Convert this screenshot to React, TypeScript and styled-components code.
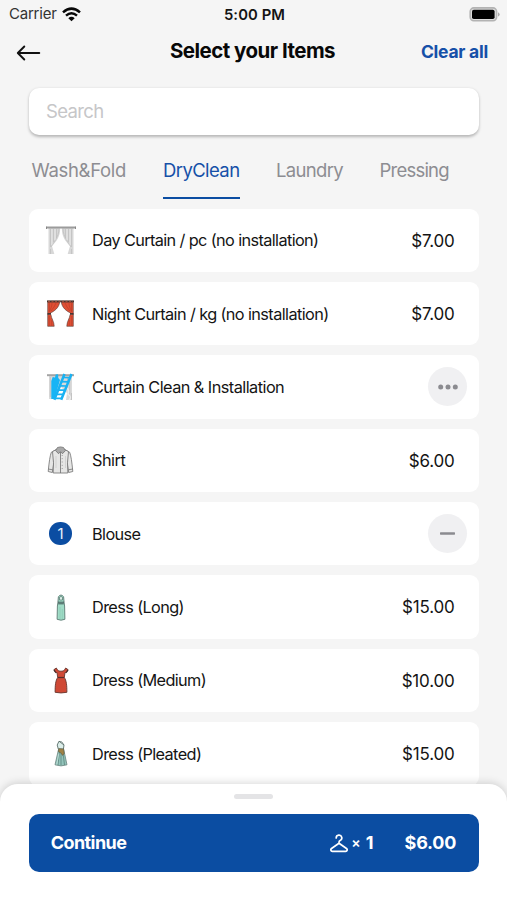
import React from "react";
import styled, { createGlobalStyle } from "styled-components";

const BLUE = "#0b4da2";

const GlobalStyle = createGlobalStyle`
  *, *::before, *::after { box-sizing: border-box; }
  body { margin: 0; background: #f5f5f5; font-family: Inter, "Liberation Sans", sans-serif; color: #111; }
  button, input { font: inherit; border: 0; padding: 0; margin: 0; background: none; }
`;

const Screen = styled.main`
  width: 507px;
  height: 900px;
  overflow: hidden;
  display: flex;
  flex-direction: column;
  background: #f5f5f5;
`;

const StatusBar = styled.div`
  height: 28px;
  flex: none;
  display: grid;
  grid-template-columns: 1fr auto 1fr;
  align-items: center;
  padding: 0 7px 0 9px;
`;

const Text = styled.span<{ $size: number; $weight?: number; $track?: number; $color?: string }>`
  font-size: ${(p) => p.$size}px;
  font-weight: ${(p) => p.$weight ?? 400};
  letter-spacing: ${(p) => p.$track ?? 0}px;
  color: ${(p) => p.$color ?? "#141414"};
  line-height: 1.2;
  white-space: nowrap;
`;

const Carrier = styled.div`
  display: flex;
  align-items: center;
  gap: 5px;
`;

const Clock = styled.div`
  padding-top: 1px;
`;

const BatterySlot = styled.div`
  display: flex;
  justify-content: flex-end;
`;

const Header = styled.header`
  height: 46px;
  flex: none;
  display: grid;
  grid-template-columns: 1fr auto 1fr;
  align-items: center;
  padding: 0 19px 0 16px;
`;

const IconButton = styled.button`
  display: flex;
  margin-top: 4px;
`;

const Title = styled.h1`
  margin: 0;
  padding: 1px 0 0 1px;
  font-size: 20.5px;
  line-height: 1.2;
  font-weight: 700;
  letter-spacing: -0.53px;
  color: #080808;
`;

const ClearButton = styled.button`
  justify-self: end;
`;

const SearchBox = styled.label`
  height: 46.5px;
  flex: none;
  margin: 14px 28px 0 29px;
  padding: 0 17px;
  display: flex;
  align-items: center;
  background: #fff;
  border-radius: 10px;
  box-shadow: 0 1.5px 3px rgba(0, 0, 0, 0.26);
`;

const SearchInput = styled.input`
  width: 100%;
  outline: 0;
  font-size: 18.5px;
  letter-spacing: -0.65px;
  &::placeholder { color: #c6c6c8; opacity: 1; }
`;

const Tabs = styled.nav`
  flex: none;
  height: 47px;
  margin: 17px 0 0 31.5px;
  display: flex;
  gap: 36.5px;
`;

const Tab = styled.button<{ $active?: boolean; $width: number }>`
  width: ${(p) => p.$width}px;
  border-bottom: 2px solid ${(p) => (p.$active ? BLUE : "transparent")};
  padding-bottom: 8px;
  display: flex;
  align-items: center;
`;

const List = styled.ul`
  list-style: none;
  margin: 10px 28px 0 29px;
  padding: 0;
  flex: 1;
  min-height: 0;
  overflow: hidden;
  display: flex;
  flex-direction: column;
  gap: 9.75px;
`;

const Row = styled.li`
  flex: none;
  height: 63.6px;
  display: flex;
  align-items: center;
  background: #fff;
  border-radius: 9px;
  padding-right: 24.5px;
`;

const IconSlot = styled.span`
  width: 63px;
  display: flex;
  justify-content: center;
  svg { display: block; }
`;

const Label = styled.span`
  flex: 1;
  display: flex;
  padding-top: 1.5px;
`;

const Price = styled.span`
  display: flex;
  padding-top: 1px;
`;

const Badge = styled.span`
  width: 22.5px;
  height: 22.5px;
  border-radius: 50%;
  background: ${BLUE};
  color: #e9f0fa;
  display: flex;
  align-items: center;
  justify-content: center;
  font-size: 15px;
`;

const RoundButton = styled.button`
  width: 39px;
  height: 39px;
  margin-right: -12.5px;
  border-radius: 50%;
  background: #f0f0f2;
  display: flex;
  align-items: center;
  justify-content: center;
`;

const Sheet = styled.footer`
  flex: none;
  height: 116px;
  background: #fff;
  border-radius: 18px 18px 0 0;
  box-shadow: 0 -1px 8px rgba(0, 0, 0, 0.16);
  display: flex;
  flex-direction: column;
  align-items: center;
  z-index: 1;
`;

const Handle = styled.div`
  width: 39.5px;
  height: 5px;
  border-radius: 3px;
  background: #e4e4e6;
  margin-top: 10px;
`;

const Continue = styled.button`
  width: 450.5px;
  height: 58.5px;
  margin: 14.5px 0 0 1px;
  padding: 1px 23px 0 22px;
  border-radius: 10px;
  background: ${BLUE};
  display: flex;
  align-items: center;
`;

const Count = styled.span`
  margin-left: auto;
  margin-right: 31px;
  display: flex;
  align-items: center;
`;

const Times = styled.span`
  margin: 0 5px 0 3px;
  display: flex;
`;

const Wifi = () => (
  <svg width="19" height="15" viewBox="0 0 19 15" fill="none" stroke="#080808" strokeWidth="2.5">
    <path d="M1 5.4Q9.5-2.2 18 5.4" />
    <path d="M4 8.6Q9.5 3.8 15 8.6" />
    <path d="M9.5 14.3 6.3 11.2Q9.5 8.5 12.7 11.2Z" fill="#080808" stroke="none" />
  </svg>
);

const Battery = () => (
  <svg width="31" height="15" viewBox="0 0 31 15">
    <rect x="1.2" y=".9" width="26.4" height="12.800" rx="3.6" fill="#dcdcdc" stroke="#b3b3b3" strokeWidth="1.6" />
    <rect x="3" y="2.800" width="22.600" height="9.200" rx="1.800" fill="#000" />
    <path d="M29 5.2q1.7.7 1.7 2.2T29 9.6z" fill="#aaa" />
  </svg>
);

const BackArrow = () => (
  <svg width="25" height="18" viewBox="0 0 25 18" fill="none" stroke="#111" strokeWidth="1.900" strokeLinecap="round" strokeLinejoin="round">
    <path d="M23.300 9H2M8.300 2.500 1.800 9l6.500 6.500" />
  </svg>
);

const DayCurtain = () => (
  <svg width="30" height="30" viewBox="0 0 30 30">
    <path d="M2.500 3h11.700c0 9-3.500 13-8.200 18l2.300 8H2.500z" fill="#d8d8d8" />
    <path d="M27.500 3H15.800c0 9 3.500 13 8.200 18l-2.300 8h5.800z" fill="#d8d8d8" />
    <path d="M4.500 4v18M7.500 4v13M10.500 4v9M13 4C12.600 12 8 17 5 22M4.500 24v5M25.500 4v18M22.500 4v13M19.500 4v9M17 4c.4 8 5 13 8 18M25.500 24v5" fill="none" stroke="#bdbdbd" strokeWidth=".7" />
    <path d="M5.900 4v16M9 4v11M24.100 4v16M21 4v11" stroke="#efefef" strokeWidth=".7" />
    <path d="M.5 2.500h29" stroke="#9b9b9b" strokeWidth="2" />
    <path d="M.5 1.500v2.500M29.500 1.500v2.500" stroke="#888" />
  </svg>
);

const NightCurtain = () => (
  <svg width="27" height="27" viewBox="0 0 27 27">
    <g fill="#df4f34" stroke="#553b36" strokeWidth=".6">
      <path d="M.7 2h12C12 7.500 8 11 2.500 13.500l-1.800 1z" />
      <path d="M26.300 2h-12C15 7.500 19 11 24.500 13.500l1.800 1z" />
      <path d="M.7 14.500h3.200c.5 4.500 3.200 6.500 3.300 11.800H.7z" />
      <path d="M26.300 14.500h-3.200c-.5 4.500-3.200 6.500-3.300 11.800h6.500z" />
    </g>
    <path d="M2.500 3v9M5 3c0 3-1 5-2.500 8M9 3Q7.500 7 4 11M2.300 16v10M4.700 20v6M24.500 3v9M22 3c0 3 1 5 2.500 8M18 3q1.500 4 5 8M24.700 16v10M22.300 20v6" stroke="#b93a28" strokeWidth=".6" fill="none" />
    <path d="M0 1.300h27" stroke="#44342f" strokeWidth="1.800" />
    <path d="M1 1.300h25" stroke="#c65a42" strokeWidth=".8" strokeDasharray="2 1.500" />
    <path d="M.5 13.800h3.500M23 13.800h3.500" stroke="#4a3431" strokeWidth="1.400" />
  </svg>
);

const CleanCurtain = () => (
  <svg width="27" height="28" viewBox="0 0 27 28">
    <path d="M2 3h23v24h-6l1-7-6-6-6 12H2z" fill="#dadada" />
    <path d="M22.700 4v22M20.500 4v12M3.300 4v20M24.500 20v7" stroke="#bcbcbc" strokeWidth=".8" />
    <path d="M19 14q4 3 2 7 4 3 1 6" fill="none" stroke="#eee" strokeWidth="1.500" />
    <path d="M0 2.200h27" stroke="#a4a4a4" strokeWidth="2" />
    <path d="M4.300 8 5.700 4 8 4.500 8.700 1.500 11 1.200 11.300 5 13 7 10.500 15.500 7.500 26H4.300z" fill="#17b4f5" />
    <path d="M17.500 1 7.300 26.800M24.500 1 14.200 26.800" stroke="#19b2f3" strokeWidth="2.500" />
    <path d="m16.300 4.500 7 .1M14.600 8.700l7 .1M13 12.900l7 .1M11.300 17.100l7 .1M9.600 21.300l7 .1M8 25.300l7 .1" stroke="#19b2f3" strokeWidth="1.700" />
  </svg>
);

const Shirt = () => (
  <svg width="27" height="28" viewBox="0 0 27 28" fill="#e6e6e5" stroke="#707070" strokeWidth=".8" strokeLinejoin="round">
    <path d="M8 4.300 4.300 6.300Q2.500 11 1.200 25.500l4.100 1 1.400-9z" />
    <path d="m19 4.300 3.700 2Q24.500 11 25.800 25.500l-4.100 1-1.400-9z" />
    <path d="m9 3.500-3.500 2.200 1 11-.3 10.300h14.600l-.3-10.300 1-11L18 3.500z" />
    <path d="m8.500 4.500 2-3q3-1.200 6 0l2 3-3 3.200-2-2-2 2z" fill="#a9a9a9" />
    <path d="M13.500 6v21M1.300 23l4.300.8M25.700 23l-4.300.8" />
    <path d="M15.200 9v16" strokeDasharray=".8 2.500" />
    <path d="M9 10v12M18.500 10v12" stroke="#cdcdcd" />
  </svg>
);

const LongDress = () => (
  <svg width="10" height="27" viewBox="0 0 10 27">
    <path d="M1.900 8.500 2.400 2.700Q5-.6 7.600 2.700l.5 5.800L8.600 12 8.900 25.300q-3.900 1.800-7.800 0L1.400 12z" fill="#a0dcc7" stroke="#5d7a74" strokeWidth=".9" />
    <path d="M3.500 6V3.200Q5 1.600 6.500 3.200V6z" fill="#d9eee6" stroke="#52736c" strokeWidth=".7" />
    <path d="M1.900 8.200h6.200M2.200 9.800h5.600" stroke="#3f5454" strokeWidth="1" />
    <path d="M4 13v12M6.300 15v10" stroke="#86c6b0" strokeWidth=".6" />
  </svg>
);

const MediumDress = () => (
  <svg width="16" height="27" viewBox="0 0 16 27">
    <path d="M3.300 1 .9 2.700l1.700 3L4 5.500l.7 5C2.600 13.500 2.100 18 2.100 25.300q5.900 1.300 11.800 0c0-7.300-.5-11.800-2.600-14.800l.7-5 1.400.2 1.700-3L12.700 1C11.500 3.900 9.500 4.300 8 4.200 6.500 4.300 4.500 3.900 3.300 1z" fill="#cf4935" stroke="#66352e" strokeWidth=".9" />
    <path d="M4.700 10.500h6.600" stroke="#572c28" strokeWidth="1.200" />
    <path d="m1 2.900 1.700 2.600M15 2.900l-1.700 2.600" stroke="#442e2b" strokeWidth="1.200" />
  </svg>
);

const PleatedDress = () => (
  <svg width="14" height="27" viewBox="0 0 14 27">
    <path d="m4.500 9.500-3.500 15.300q6 2.200 12 0L9.700 9.500z" fill="#93c4bb" stroke="#6b847f" strokeWidth=".8" />
    <path d="M4.300 9 3.200 5 5 1.200l3 2.300 2 1.500-.6 4.200z" fill="#dceeea" stroke="#596e6a" strokeWidth=".9" />
    <path d="M5.100 1.400q3-.8 4.900 3.600" fill="none" stroke="#596e6a" strokeWidth=".8" />
    <path d="M5.500 12 4 25M7 13v12M9 13l1.500 12" stroke="#5c857e" strokeWidth=".8" />
    <path d="M4.800 13.500 2.800 24.500" stroke="#c7e3dc" strokeWidth=".8" />
    <path d="m4.800 8.700 4.800.2.600 4.500-1.600 2-1.700-2.500-2.500-1.300z" fill="#a08245" stroke="#5b5940" strokeWidth=".6" />
  </svg>
);

const Hanger = () => (
  <svg width="18" height="19" viewBox="0 0 18 19" fill="none" stroke="#fff" strokeWidth="1.700" strokeLinecap="round" strokeLinejoin="round">
    <path d="M6.200 3.900a2.800 2.800 0 1 1 3.900 2.600Q9 7 9 8.300v1l7.500 5.200c1.200 1 .7 2.800-.8 2.800H2.300c-1.500 0-2-1.800-.8-2.800L9 9.300" />
  </svg>
);

const Dots = () => (
  <svg width="20" height="6" viewBox="0 0 20 6" fill="#8b8b90">
    <circle cx="2.700" cy="3" r="2.500" />
    <circle cx="10" cy="3" r="2.500" />
    <circle cx="17.300" cy="3" r="2.500" />
  </svg>
);

const Minus = () => (
  <svg width="15" height="3" viewBox="0 0 15 3">
    <rect y=".3" width="15" height="2.400" rx=".6" fill="#8b8b90" />
  </svg>
);

type Item = { name: string; track: number; icon: React.ReactNode; price?: string; action?: React.ReactNode };

const items: Item[] = [
  { name: "Day Curtain / pc (no installation)", track: -0.62, icon: <DayCurtain />, price: "$7.00" },
  { name: "Night Curtain / kg (no installation)", track: -0.6, icon: <NightCurtain />, price: "$7.00" },
  { name: "Curtain Clean & Installation", track: -0.54, icon: <CleanCurtain />, action: <Dots /> },
  { name: "Shirt", track: -0.5, icon: <Shirt />, price: "$6.00" },
  { name: "Blouse", track: -0.6, icon: <Badge>1</Badge>, action: <Minus /> },
  { name: "Dress (Long)", track: -0.62, icon: <LongDress />, price: "$15.00" },
  { name: "Dress (Medium)", track: -0.62, icon: <MediumDress />, price: "$10.00" },
  { name: "Dress (Pleated)", track: -0.62, icon: <PleatedDress />, price: "$15.00" },
];

const tabs = [
  { name: "Wash&Fold", width: 95, track: -0.33 },
  { name: "DryClean", width: 76.5, track: -0.6 },
  { name: "Laundry", width: 67, track: -0.68 },
  { name: "Pressing", width: 72, track: -0.78 },
];

export default function App() {
  return (
    <>
      <GlobalStyle />
      <Screen>
        <StatusBar>
          <Carrier>
            <Text $size={15} $track={-0.22} $color="#333">Carrier</Text>
            <Wifi />
          </Carrier>
          <Clock><Text $size={14.8} $weight={600} $track={0.1}>5:00 PM</Text></Clock>
          <BatterySlot><Battery /></BatterySlot>
        </StatusBar>
        <Header>
          <IconButton aria-label="Back"><BackArrow /></IconButton>
          <Title>Select your Items</Title>
          <ClearButton><Text $size={17.5} $weight={700} $track={-0.25} $color="#1650a8">Clear all</Text></ClearButton>
        </Header>
        <SearchBox><SearchInput placeholder="Search" /></SearchBox>
        <Tabs>
          {tabs.map((t) => (
            <Tab key={t.name} $active={t.name === "DryClean"} $width={t.width}>
              <Text $size={18.5} $track={t.track} $color={t.name === "DryClean" ? "#1650a8" : "#8d8d92"}>{t.name}</Text>
            </Tab>
          ))}
        </Tabs>
        <List>
          {items.map((item) => (
            <Row key={item.name}>
              <IconSlot>{item.icon}</IconSlot>
              <Label><Text $size={16.3} $track={item.track}>{item.name}</Text></Label>
              {item.price && <Price><Text $size={17} $track={-0.2}>{item.price}</Text></Price>}
              {item.action && <RoundButton>{item.action}</RoundButton>}
            </Row>
          ))}
        </List>
        <Sheet>
          <Handle />
          <Continue>
            <Text $size={18} $weight={700} $track={-0.58} $color="#fff">Continue</Text>
            <Count>
              <Hanger />
              <Times><Text $size={14} $weight={600} $color="#fff">×</Text></Times>
              <Text $size={18} $weight={700} $color="#fff">1</Text>
            </Count>
            <Text $size={18} $weight={700} $track={-0.2} $color="#fff">$6.00</Text>
          </Continue>
        </Sheet>
      </Screen>
    </>
  );
}
